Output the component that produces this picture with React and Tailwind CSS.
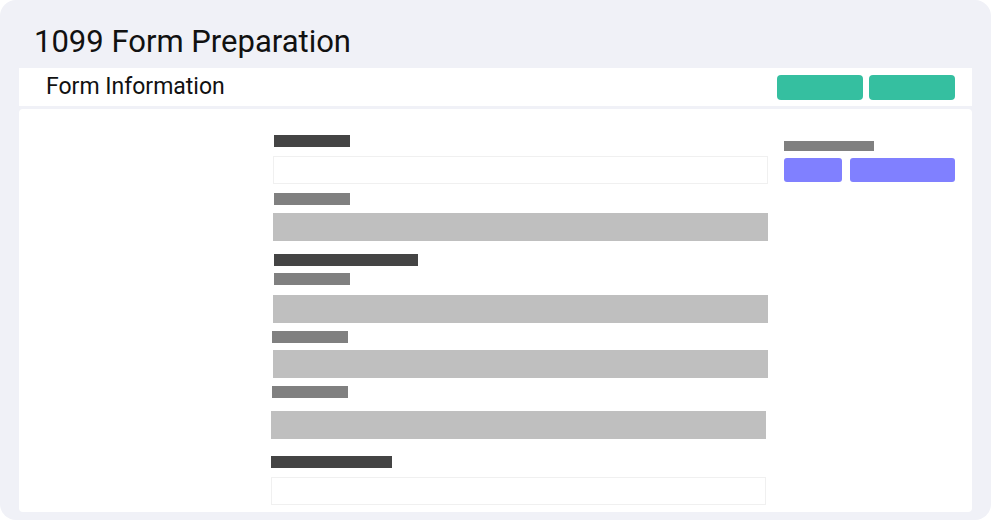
import React from "react";

function Bar({ className }) {
  return <div className={"h-[12px] " + className} />;
}

export default function App() {
  return (
    <div className="w-[991px] h-[521px] bg-white" style={{ fontFamily: "Roboto, 'Noto Sans', sans-serif" }}>
      <div className="h-[520px] rounded-[16px] bg-[#f0f1f7] px-[19px]">
        <div className="h-[68px] pl-[15px] pt-[24px]">
          <h1 className="text-[31px] leading-[36px] text-[#111]">1099 Form Preparation</h1>
        </div>
        <div className="h-[38px] bg-white flex justify-between pl-[27px] pr-[17px]">
          <span className="text-[23px] leading-[38px] text-[#111]">Form Information</span>
          <div className="flex gap-[6px] pt-[7px]">
            <button className="w-[86px] h-[25px] rounded-[4px] bg-[#35bfa0]" />
            <button className="w-[86px] h-[25px] rounded-[4px] bg-[#35bfa0]" />
          </div>
        </div>
        <div className="mt-[3px] h-[403px] bg-white rounded-[4px] flex">
          <div className="ml-[254px] w-[495px] pt-[26px] flex flex-col">
            <Bar className="ml-[1px] w-[76px] bg-[#444]" />
            <div className="mt-[9px] w-[495px] h-[28px] border border-[#f0f0f0]" />
            <Bar className="mt-[9px] ml-[1px] w-[76px] bg-[#808080]" />
            <div className="mt-[8px] w-[495px] h-[28px] bg-[#bfbfbf]" />
            <Bar className="mt-[13px] ml-[1px] w-[144px] bg-[#444]" />
            <Bar className="mt-[7px] ml-[1px] w-[76px] bg-[#808080]" />
            <div className="mt-[10px] w-[495px] h-[28px] bg-[#bfbfbf]" />
            <Bar className="mt-[8px] -ml-[1px] w-[76px] bg-[#808080]" />
            <div className="mt-[7px] w-[495px] h-[28px] bg-[#bfbfbf]" />
            <Bar className="mt-[8px] -ml-[1px] w-[76px] bg-[#808080]" />
            <div className="mt-[13px] -ml-[2px] w-[495px] h-[28px] bg-[#bfbfbf]" />
            <Bar className="mt-[17px] -ml-[2px] w-[121px] bg-[#444]" />
            <div className="mt-[9px] -ml-[2px] w-[495px] h-[28px] border border-[#f0f0f0]" />
          </div>
          <div className="ml-[16px] pt-[32px] flex flex-col">
            <div className="w-[90px] h-[10px] bg-[#808080]" />
            <div className="mt-[7px] flex gap-[8px]">
              <div className="w-[58px] h-[24px] rounded-[3px] bg-[#8080ff]" />
              <div className="w-[105px] h-[24px] rounded-[3px] bg-[#8080ff]" />
            </div>
          </div>
        </div>
      </div>
    </div>
  );
}
